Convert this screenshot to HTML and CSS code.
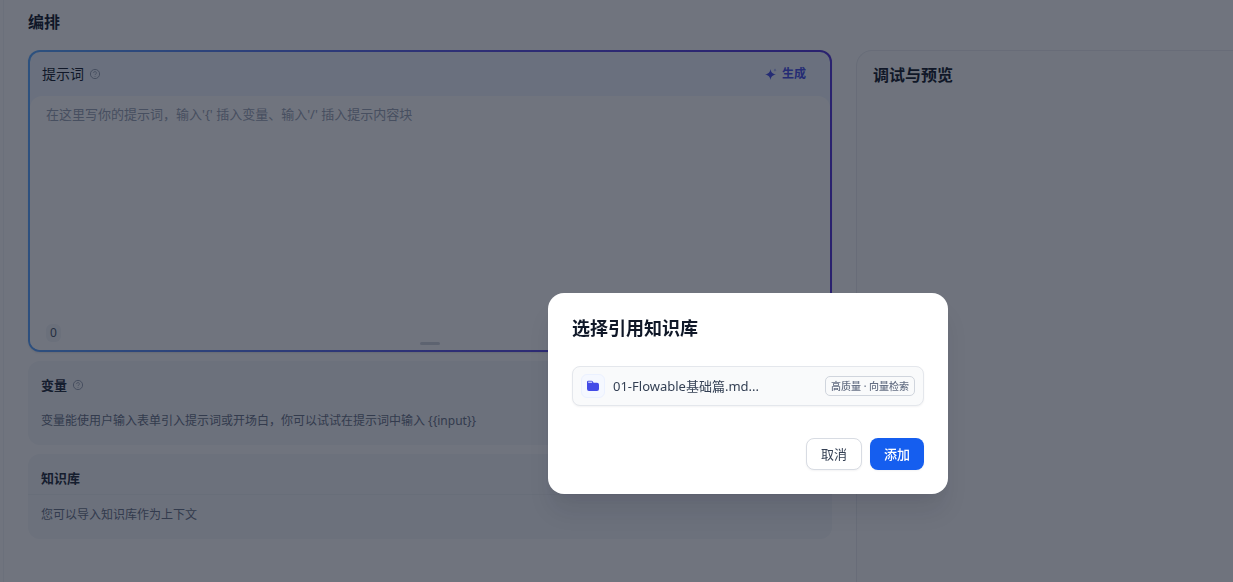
FILE: index.html
```html
<!DOCTYPE html>
<html lang="zh-CN">
<head>
    <meta charset="UTF-8">
    <meta name="viewport" content="width=device-width, initial-scale=1.0">
    <title>编排</title>
    <link rel="stylesheet" href="styles.css">
</head>
<body>
    <div class="page">
        <main class="workspace">
            <section class="config">
                <h1 class="page-title">编排</h1>

                <div class="prompt-card">
                    <div class="prompt-inner">
                        <div class="prompt-header">
                            <label class="prompt-label" for="prompt">提示词</label>
                            <svg class="help-icon" viewBox="0 0 12 12" fill="none" stroke="currentColor">
                                <circle cx="6" cy="6" r="4.6"/>
                                <path d="M4.6 4.9a1.4 1.4 0 1 1 2 1.3c-.4.2-.6.4-.6.8M6 8.1v.7" stroke-width=".9"/>
                            </svg>
                            <button class="generate-btn" type="button">
                                <svg class="sparkle-icon" viewBox="0 0 12 12" fill="currentColor">
                                    <path d="M5.500 1c.6 3.300 1.800 4.700 5.500 5.500-3.700.9-4.900 2.200-5.500 5.500-.6-3.300-1.800-4.600-5.500-5.500 3.700-.8 4.900-2.200 5.500-5.500z"/>
                                    <path opacity=".5" d="M10 .2c.2 1.200.7 1.600 1.900 1.900-1.200.3-1.700.7-1.900 1.900-.2-1.200-.7-1.600-1.900-1.900 1.200-.3 1.700-.7 1.900-1.900z"/>
                                </svg>
                                生成
                            </button>
                        </div>
                        <div class="prompt-body">
                            <textarea class="prompt-input" id="prompt" placeholder="在这里写你的提示词，输入'{' 插入变量、输入'/' 插入提示内容块"></textarea>
                            <div class="prompt-footer">
                                <span class="counter">0</span>
                                <span class="resize-handle"></span>
                            </div>
                        </div>
                    </div>
                </div>

                <div class="panel">
                    <div class="panel-header">
                        <h2>变量</h2>
                        <svg class="help-icon" viewBox="0 0 12 12" fill="none" stroke="currentColor">
                            <circle cx="6" cy="6" r="4.6"/>
                            <path d="M4.6 4.9a1.4 1.4 0 1 1 2 1.3c-.4.2-.6.4-.6.8M6 8.1v.7" stroke-width=".9"/>
                        </svg>
                    </div>
                    <p>变量能使用户输入表单引入提示词或开场白，你可以试试在提示词中输入 {{input}}</p>
                </div>

                <div class="panel">
                    <div class="panel-header divided">
                        <h2>知识库</h2>
                    </div>
                    <p>您可以导入知识库作为上下文</p>
                </div>
            </section>

            <aside class="preview">
                <h2>调试与预览</h2>
            </aside>
        </main>
    </div>

    <!-- Dataset picker -->
    <div class="overlay">
        <div class="modal" role="dialog" aria-labelledby="modalTitle">
            <h2 class="modal-title" id="modalTitle">选择引用知识库</h2>
            <button class="dataset" type="button">
                <span class="dataset-icon">
                    <svg viewBox="0 0 12 12" fill="currentColor">
                        <path d="M0 2a1.300 1.300 0 0 1 1.300-1.300h3.200c.5 0 .8.2 1.100.6l1 1.400H10a2 2 0 0 1 2 2V9a2 2 0 0 1-2 2H2a2 2 0 0 1-2-2z"/>
                        <path d="M1.200 2.200h3.900" stroke="#f5f8ff" stroke-width="1"/>
                    </svg>
                </span>
                <span class="dataset-name">01-Flowable基础篇.md...</span>
                <span class="badge">高质量 · 向量检索</span>
            </button>
            <div class="modal-actions">
                <button class="btn" type="button">取消</button>
                <button class="btn btn-primary" type="button">添加</button>
            </div>
        </div>
    </div>
</body>
</html>
```

FILE: styles.css
```css
* {
    box-sizing: border-box;
    margin: 0;
    padding: 0;
}
body {
    background-color: #fff;
    color: #101828;
    font-family: "Noto Sans", "Noto Sans CJK SC", sans-serif;
    font-size: 13px;
    line-height: 20px;
}
button, textarea {
    font: inherit;
    color: inherit;
}
button {
    cursor: pointer;
}
.page {
    min-height: 100vh;
    padding-left: 3px;
    display: flex;
    overflow: hidden;
}
.workspace {
    flex: 1;
    display: grid;
    grid-template-columns: 804fr 377fr;
    column-gap: 24px;
    padding-left: 24px;
    border-left: 1px solid #f2f4f7;
}
.page-title {
    font-size: 16px;
    line-height: 24px;
    font-weight: 600;
    padding: 10px 0 16px;
}
.help-icon {
    width: 12px;
    height: 12px;
    color: #98a2b3;
}

/* Prompt editor */
.prompt-card {
    padding: 2px;
    border-radius: 12px;
    background: linear-gradient(95deg, #57a8ff 0%, #5a50e8 55%, #5030d8 100%);
    box-shadow: 0 1px 2px rgba(16, 24, 40, 0.1);
    margin-bottom: 9px;
}
.prompt-inner {
    border-radius: 10px;
    background-color: #eff6ff;
    overflow: hidden;
}
.prompt-header {
    display: flex;
    align-items: center;
    height: 44px;
    padding: 0 24px 0 12px;
}
.prompt-label {
    font-size: 14px;
    margin-right: 5px;
}
.generate-btn {
    display: flex;
    align-items: center;
    gap: 5px;
    margin-left: auto;
    border: none;
    background: none;
    color: #444ce7;
    font-size: 12px;
    font-weight: 600;
}
.sparkle-icon {
    width: 12px;
    height: 12px;
}
.prompt-body {
    background-color: #fff;
    border-radius: 12px 12px 0 0;
}
.prompt-input {
    display: block;
    width: 100%;
    height: 224px;
    padding: 8px 16px;
    border: none;
    outline: none;
    resize: none;
    background: none;
}
.prompt-input::placeholder {
    color: #98a2b3;
}
.prompt-footer {
    display: grid;
    grid-template-columns: 1fr auto 1fr;
    height: 30px;
    padding: 0 16px;
}
.counter {
    justify-self: start;
    height: 18px;
    line-height: 18px;
    padding: 0 4px;
    border-radius: 6px;
    background-color: #f2f4f7;
    color: #475467;
    font-size: 12px;
    margin-top: 4px;
}
.resize-handle {
    align-self: end;
    width: 20px;
    height: 3px;
    margin-bottom: 5px;
    border-radius: 2px;
    background-color: #d0d5dd;
}

/* Variables / knowledge */
.panel {
    margin: 0 0 9px;
    border-radius: 12px;
    background-color: #f5f7fa;
    padding-bottom: 14px;
}
.panel-header {
    display: flex;
    align-items: center;
    gap: 5px;
    height: 40px;
    padding: 8px 13px 0;
}
.panel-header.divided {
    height: 41px;
    padding-top: 7px;
    border-bottom: 1px solid #eceff3;
}
.panel h2 {
    font-size: 13px;
    line-height: 20px;
    font-weight: 600;
    color: #1d2939;
}
.panel p {
    padding: 10px 13px 0;
    font-size: 12px;
    color: #667085;
}

/* Preview */
.preview {
    margin-top: 50px;
    padding: 12px 16px;
    border: 1px solid #eaecf0;
    border-width: 1px 0 0 1px;
    border-radius: 16px 0 0 0;
    background-color: #fcfcfd;
}
.preview h2 {
    font-size: 16px;
    line-height: 24px;
    font-weight: 600;
}

/* Modal */
.overlay {
    position: fixed;
    inset: 0;
    display: flex;
    justify-content: center;
    align-items: flex-start;
    padding: 293px 0 0 263px;
    background-color: rgba(16, 24, 40, 0.6);
}
.modal {
    width: 400px;
    padding: 20px 24px 24px;
    border-radius: 16px;
    background-color: #fff;
    box-shadow: 0 20px 24px -4px rgba(16, 24, 40, 0.1), 0 8px 8px -4px rgba(16, 24, 40, 0.04);
}
.modal-title {
    font-size: 18px;
    line-height: 30px;
    font-weight: 700;
}
.dataset {
    display: flex;
    align-items: center;
    width: 100%;
    height: 40px;
    margin: 23px 0 32px;
    padding: 0 8px;
    border: 1px solid #e4e7ec;
    border-radius: 8px;
    background-color: #f9fafb;
    box-shadow: 0 1px 2px rgba(16, 24, 40, 0.05);
    text-align: left;
}
.dataset-icon {
    display: flex;
    align-items: center;
    justify-content: center;
    width: 24px;
    height: 24px;
    margin-right: 8px;
    border: 1px solid #ebf1ff;
    border-radius: 6px;
    background-color: #f5f8ff;
    color: #444ce7;
}
.dataset-icon svg {
    width: 12px;
    height: 12px;
}
.dataset-name {
    flex: 1;
    color: #344054;
}
.badge {
    height: 20px;
    padding: 0 5px;
    border: 1px solid #d0d5dd;
    border-radius: 5px;
    color: #667085;
    font-size: 10px;
    line-height: 18px;
    font-weight: 500;
}
.modal-actions {
    display: flex;
    justify-content: flex-end;
    gap: 8px;
}
.btn {
    height: 32px;
    padding: 0 14px;
    border: 1px solid #d8dce3;
    border-radius: 8px;
    background-color: #fff;
    box-shadow: 0 1px 2px rgba(16, 24, 40, 0.05);
    color: #344054;
}
.btn-primary {
    padding: 0 14px;
    border: none;
    background-color: #155eef;
    color: #fff;
    font-weight: 500;
}
```
